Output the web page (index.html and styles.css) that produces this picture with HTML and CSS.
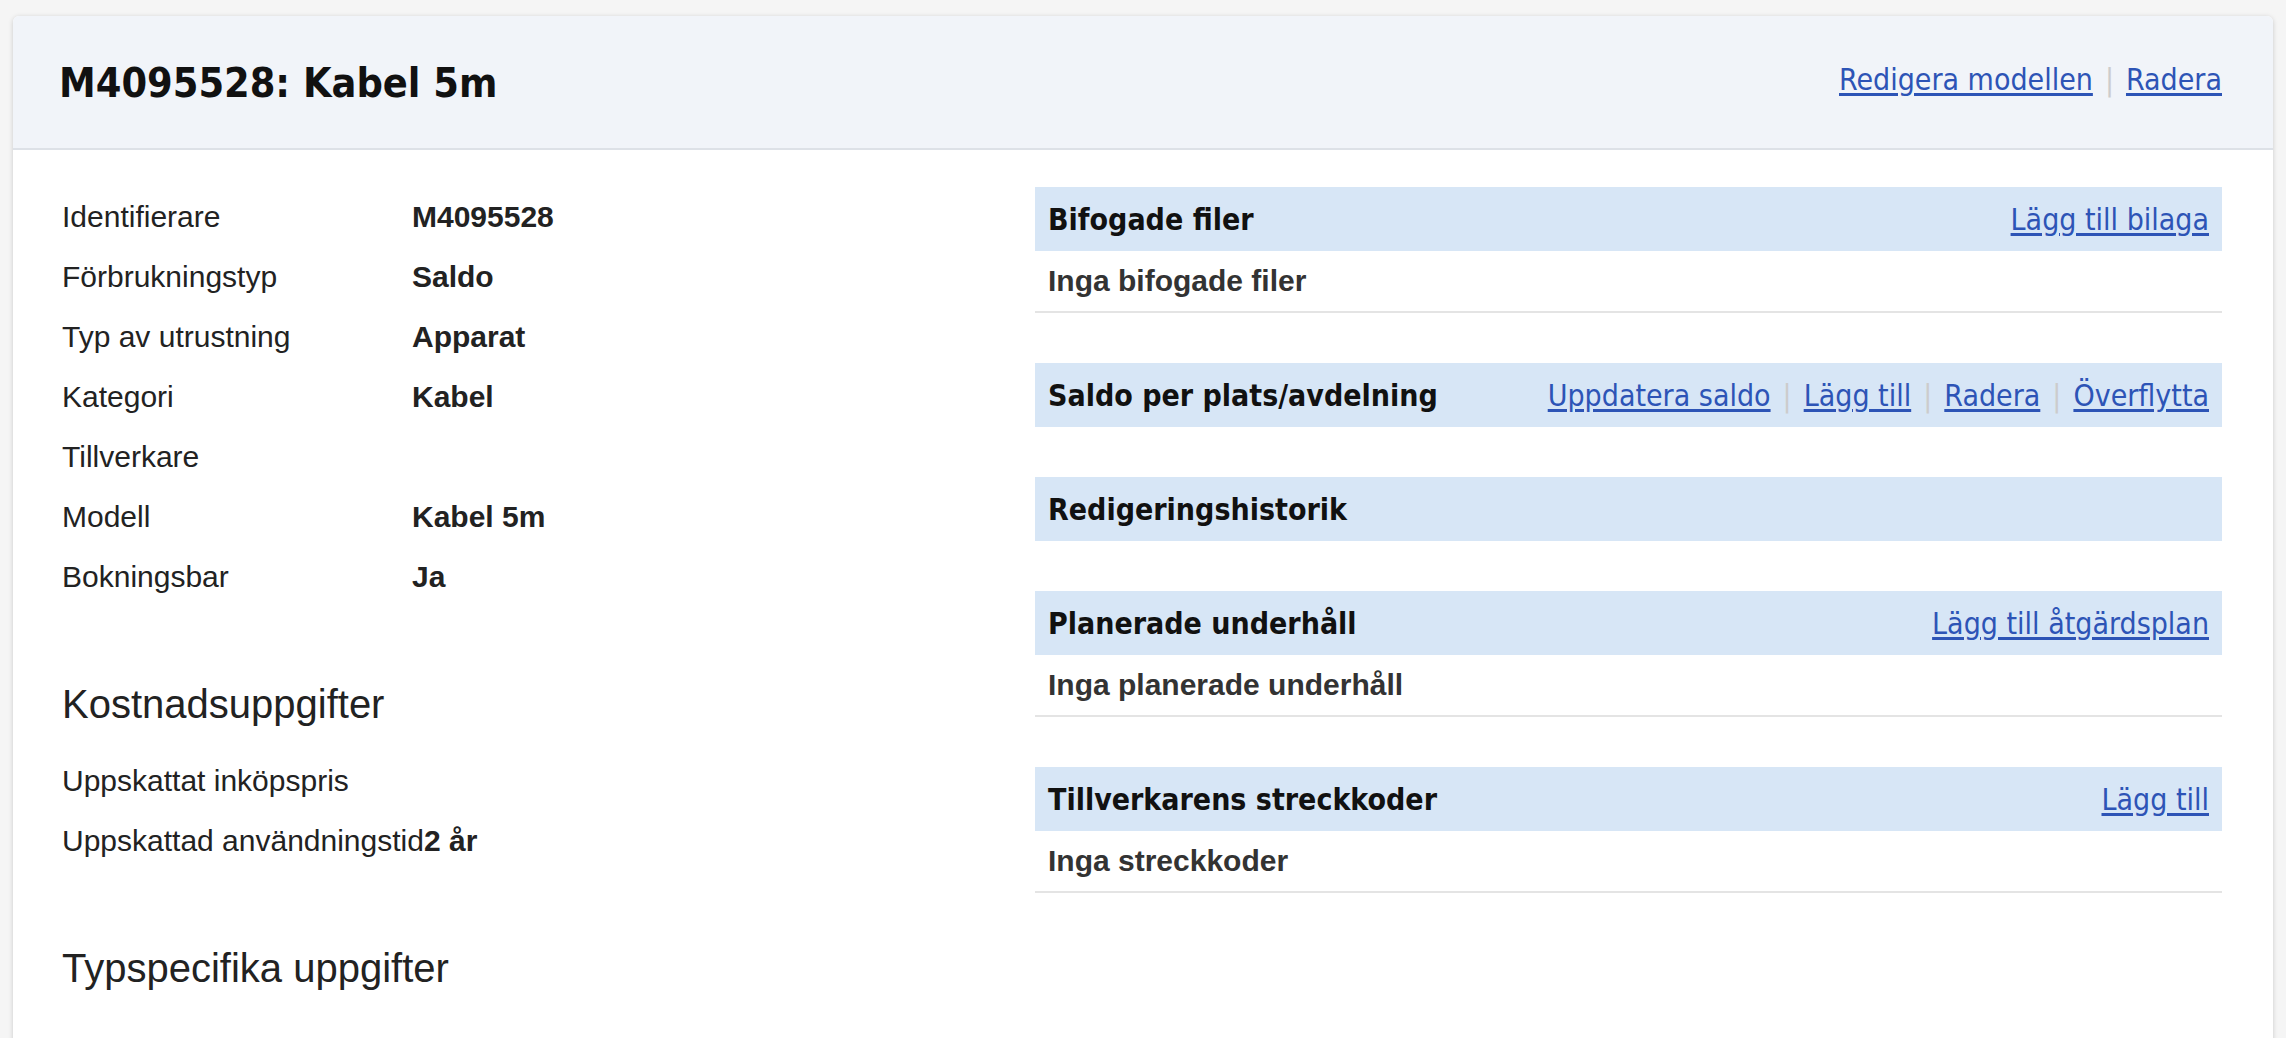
FILE: index.html
```html
<!DOCTYPE html>
<html lang="sv">
<head>
<meta charset="utf-8">
<title>M4095528: Kabel 5m</title>
<link rel="stylesheet" href="styles.css">
</head>
<body>
<div class="card">
  <div class="card-head">
    <h1 class="title">M4095528: Kabel 5m</h1>
    <div class="actions">
      <a href="#">Redigera modellen</a><span class="sep">|</span><a href="#">Radera</a>
    </div>
  </div>
  <div class="card-body">
    <div class="col-left">
      <table class="props">
        <tr><td class="label">Identifierare</td><td class="value">M4095528</td></tr>
        <tr><td class="label">Förbrukningstyp</td><td class="value">Saldo</td></tr>
        <tr><td class="label">Typ av utrustning</td><td class="value">Apparat</td></tr>
        <tr><td class="label">Kategori</td><td class="value">Kabel</td></tr>
        <tr><td class="label">Tillverkare</td><td class="value"></td></tr>
        <tr><td class="label">Modell</td><td class="value">Kabel 5m</td></tr>
        <tr><td class="label">Bokningsbar</td><td class="value">Ja</td></tr>
      </table>
      <h2 class="section-title">Kostnadsuppgifter</h2>
      <table class="props">
        <tr><td class="label">Uppskattat inköpspris</td><td class="value"></td></tr>
        <tr><td class="label">Uppskattad användningstid</td><td class="value">2 år</td></tr>
      </table>
      <h2 class="section-title">Typspecifika uppgifter</h2>
    </div>
    <div class="col-right">
      <section class="panel">
        <div class="panel-head">
          <h3 class="panel-title">Bifogade filer</h3>
          <div class="actions"><a href="#">Lägg till bilaga</a></div>
        </div>
        <div class="panel-row">Inga bifogade filer</div>
      </section>
      <section class="panel">
        <div class="panel-head">
          <h3 class="panel-title">Saldo per plats/avdelning</h3>
          <div class="actions">
            <a href="#">Uppdatera saldo</a><span class="sep">|</span><a href="#">Lägg till</a><span class="sep">|</span><a href="#">Radera</a><span class="sep">|</span><a href="#">Överflytta</a>
          </div>
        </div>
      </section>
      <section class="panel">
        <div class="panel-head">
          <h3 class="panel-title">Redigeringshistorik</h3>
        </div>
      </section>
      <section class="panel">
        <div class="panel-head">
          <h3 class="panel-title">Planerade underhåll</h3>
          <div class="actions"><a href="#">Lägg till åtgärdsplan</a></div>
        </div>
        <div class="panel-row">Inga planerade underhåll</div>
      </section>
      <section class="panel">
        <div class="panel-head">
          <h3 class="panel-title">Tillverkarens streckkoder</h3>
          <div class="actions"><a href="#">Lägg till</a></div>
        </div>
        <div class="panel-row">Inga streckkoder</div>
      </section>
    </div>
  </div>
</div>
</body>
</html>
```
FILE: styles.css
```css
html, body {
  margin: 0;
  padding: 0;
}
body {
  background: #f5f5f5;
  font-family: "Liberation Sans", Arial, sans-serif;
  font-size: 30px;
  color: #222;
  padding: 16px 13px 0 13px;
}
.card {
  background: #fff;
  border-radius: 6px;
  box-shadow: 0 1px 5px rgba(0, 0, 0, 0.18);
  overflow: hidden;
}
.card-head {
  height: 132px;
  background: #f1f4f9;
  border-bottom: 2px solid #dde1e7;
  display: flex;
  align-items: center;
  justify-content: space-between;
  padding: 0 51px 0 46px;
}
.title {
  margin: 0;
  font-family: "DejaVu Sans Condensed", "DejaVu Sans", sans-serif;
  font-stretch: semi-condensed;
  font-weight: bold;
  font-size: 41px;
  color: #111;
  line-height: 1;
  padding-top: 2px;
}
.actions {
  font-family: "DejaVu Sans Condensed", "DejaVu Sans", sans-serif;
  font-stretch: semi-condensed;
  font-size: 30px;
  white-space: nowrap;
}
.actions a {
  color: #2d54b6;
  text-decoration: underline;
  text-underline-offset: 3px;
}
.sep {
  color: #cccccc;
  margin: 0 12px;
}
.card-head .actions {
  padding-bottom: 6px;
}
.card-body {
  display: grid;
  grid-template-columns: 973fr 1187fr;
  padding: 37px 51px 80px 49px;
}
.props {
  border-collapse: collapse;
}
.props td {
  padding: 0;
  height: 60px;
  vertical-align: middle;
  white-space: nowrap;
}
.props .label {
  width: 350px;
  color: #222;
}
.props .value {
  font-weight: bold;
  color: #222;
}
.section-title {
  font-weight: normal;
  font-size: 40px;
  line-height: 48px;
  margin: 73px 0 23px;
  color: #222;
}
.panel {
  margin-bottom: 50px;
}
.panel-head {
  height: 64px;
  background: #d7e6f6;
  display: flex;
  align-items: center;
  justify-content: space-between;
  padding: 0 13px 0 13px;
}
.panel-title {
  margin: 0;
  font-family: "DejaVu Sans Condensed", "DejaVu Sans", sans-serif;
  font-stretch: semi-condensed;
  font-weight: bold;
  font-size: 30px;
  color: #111;
}
.panel-row {
  height: 60px;
  line-height: 60px;
  padding: 0 13px;
  border-bottom: 2px solid #e4e4e4;
  font-weight: bold;
  color: #333;
}
```
